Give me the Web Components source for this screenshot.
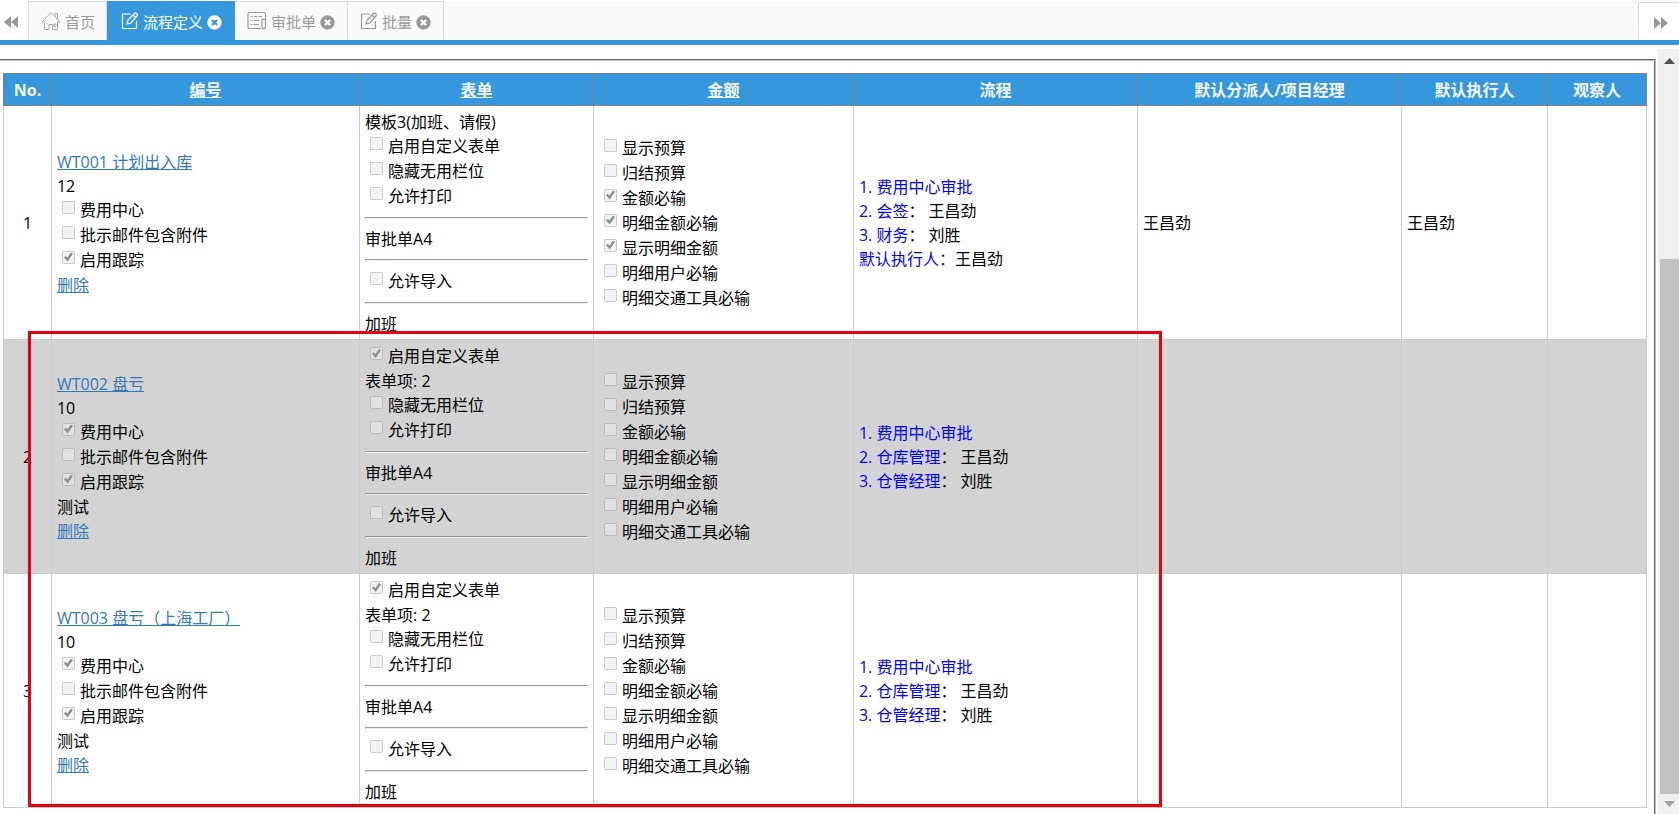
<!DOCTYPE html>
<html lang="zh-CN">
<head>
<meta charset="utf-8">
<title>流程定义</title>
<style>
html, body { height: 100%; margin: 0; }
body { overflow: hidden; background: #fff; color: #000; font: 16px/24px "Open Sans", "Noto Sans CJK SC", sans-serif; }
</style>
</head>
<body>
<app-shell>
  <tab-bar slot="tabs">
    <tab-item icon="home">首页</tab-item>
    <tab-item icon="edit" active closable>流程定义</tab-item>
    <tab-item icon="form" closable>审批单</tab-item>
    <tab-item icon="edit" closable>批量</tab-item>
  </tab-bar>
  <flow-table></flow-table>
</app-shell>
<script>
const define = (name, html, setup) => customElements.define(name, class extends HTMLElement {
  constructor() {
    super();
    this.attachShadow({ mode: 'open' }).innerHTML = html;
  }
  connectedCallback() { if (setup && !this.ready) { this.ready = true; setup(this, this.shadowRoot); } }
});

define('app-shell', `
<style>
:host { display: flex; flex-direction: column; height: 100vh; }
.body { flex: 1; min-height: 0; display: flex; gap: 2px; }
.panel { flex: 1; min-width: 0; box-sizing: border-box; margin-top: 14px; padding: 13px 8px 0 3px; overflow: hidden;
  border-top: 1px solid #6e6e6e; border-right: 1px solid #bbb; box-shadow: inset 0 1px #bbb, inset -1px 0 #6e6e6e; }
scroll-rail { margin-top: 4px; }
</style>
<slot name="tabs"></slot>
<div class="body"><main class="panel"><slot></slot></main><scroll-rail></scroll-rail></div>`);

define('scroll-rail', `
<style>
:host { display: flex; flex-direction: column; width: 21px; background: #f0f0f0; box-sizing: border-box; padding-left: 2px; }
button { all: unset; height: 20px; display: flex; align-items: center; justify-content: center; }
button:first-of-type { height: 24px; }
svg { display: block; }
.track { flex: 1; display: flex; flex-direction: column; }
.rest { flex: 186; }
.thumb { flex: 535; background: #c1c1c1; }
</style>
<button aria-label="向上滚动"><svg width="11" height="6"><path d="M0 6L5.500 0L11 6z" fill="#505050"/></svg></button>
<div class="track"><div class="rest"></div><div class="thumb"></div></div>
<button aria-label="向下滚动"><svg width="11" height="6"><path d="M0 0L5.500 6L11 0z" fill="#a3a3a3"/></svg></button>`);

define('tab-bar', `
<style>
:host { display: flex; height: 39px; padding-top: 1px; background: linear-gradient(#fff 1px, #fafafa 1px); border-bottom: 5px solid #3598dc; }
nav { flex: 1; display: flex; min-width: 0; }
button { all: unset; box-sizing: border-box; background: #fff; display: flex; align-items: center; color: #999; }
.prev { width: 29px; padding-left: 4px; padding-top: 2px; border-right: 1px solid #ddd; }
.next { width: 41px; padding-left: 15px; margin-top: 1px; padding-top: 2px; border-left: 1px solid #ddd; border-top: 1px solid #ddd; }
</style>
<button class="prev" aria-label="向左"><svg width="14" height="14"><path d="M7 1v12L0 7zM14 1v12L7 7z" fill="#999"/></svg></button>
<nav><slot></slot></nav>
<button class="next" aria-label="向右"><svg width="14" height="14"><path d="M0 1v12L7 7zM7 1v12L14 7z" fill="#999"/></svg></button>`);

const icons = {
  home: `<svg width="20" height="20" fill="none" stroke="#aaa" stroke-width="1"><path d="M1 11L10 1.500L19 11M1 11h2.500M16.500 11H19M3.500 11v7.500H8v-5h3.500v5h5V11M5.500 12.500h1M13 13h2v2.500h-2zM14 5.500v-3h2.500v5.500"/></svg>`,
  edit: `<svg width="18" height="18" fill="none" stroke="currentColor" stroke-width="1.200"><path d="M10 2H2.500Q1.500 2 1.500 3v12.500q0 1 1 1H14.500q1 0 1-1V9"/><path d="M6 12l1-4L13.500 1.500q1-1 2 0l.5.500q1 1 0 2L10 11zM12 3l3 3"/></svg>`,
  form: `<svg width="20" height="20" fill="none" stroke="currentColor" stroke-width="1.200"><path d="M14 17.500H2.500Q1 17.500 1 16V3Q1 1.500 2.500 1.500H17Q18.500 1.500 18.500 3V15.500q0 2-1.500 2.500q-2-.5-2-2.500V8.500h3.500M3.500 5.500h2M7 5.500h3M11.500 5.500h3.500M3.500 9.500h2M7 9.500h5M3.500 13.500h2M7 13.500h5"/></svg>`
};

define('tab-item', `
<style>
:host { display: block; flex: none; color: #999; border-top: 1px solid #ddd; border-right: 1px solid #ddd; }
:host([active]) { color: #fff; background: #3598dc; border-color: #3598dc; --cross: #3598dc; }
.tab { display: flex; box-sizing: border-box; align-items: center; height: 38px; padding: 2px 11px 0 12px; }
:host([closable]) .tab { padding-right: 12px; }
:host([active]) .tab { padding-left: 14px; }
a { display: flex; align-items: center; gap: 4px; color: inherit; text-decoration: none; font-size: 15px; }
.icon { display: flex; padding-bottom: 2px; }
button { all: unset; margin-left: 4px; display: flex; }
.cross { stroke: var(--cross, #fafafa); }
</style>
<div class="tab"><a href="#"><span class="icon"></span><slot></slot></a></div>`,
(host, root) => {
  root.querySelector('.icon').innerHTML = icons[host.getAttribute('icon')];
  if (host.hasAttribute('closable')) {
    root.querySelector('.tab').insertAdjacentHTML('beforeend',
      `<button aria-label="关闭"><svg width="15" height="15"><circle cx="7.500" cy="7.500" r="7.200" fill="currentColor"/><path class="cross" d="M5 5l5 5M10 5l-5 5" stroke-width="2.400"/></svg></button>`);
  }
});

define('check-line', `
<style>
:host { display: block; height: 25px; }
label { display: flex; gap: 5px; padding-left: 5px; line-height: 25px; white-space: nowrap; }
input { appearance: none; flex: none; box-sizing: border-box; width: 13px; height: 13px; margin: 3px 0 0;
  border: 1px solid rgba(0,0,0,.17); border-radius: 2px; background: rgba(235,235,235,.6); }
input:checked::before { content: ""; display: block; width: 9px; height: 9px; margin: 1px;
  background: #909090; clip-path: polygon(0 55%, 18% 35%, 38% 55%, 78% 0, 100% 15%, 42% 100%); }
</style>
<label><input type="checkbox" disabled><span><slot></slot></span></label>`,
(host, root) => { root.querySelector('input').checked = host.hasAttribute('checked'); });

const check = (text, on) => `<check-line${on ? ' checked' : ''}>${text}</check-line>`;
const line = html => `<div>${html}</div>`;
const amounts = ['显示预算', '归结预算', '金额必输', '明细金额必输', '显示明细金额', '明细用户必输', '明细交通工具必输'];
const rows = [
  { code: 'WT001 计划出入库', n: 12, cost: 0, custom: 0, form: '模板3(加班、请假)', amount: [2, 3, 4], person: '王昌劲',
    steps: [['费用中心审批'], ['会签', '王昌劲'], ['财务', '刘胜']], executor: '王昌劲' },
  { code: 'WT002 盘亏', n: 10, cost: 1, custom: 1, items: 2, note: '测试', amount: [], person: '',
    steps: [['费用中心审批'], ['仓库管理', '王昌劲'], ['仓管经理', '刘胜']] },
  { code: 'WT003 盘亏（上海工厂）', n: 10, cost: 1, custom: 1, items: 2, note: '测试', amount: [], person: '',
    steps: [['费用中心审批'], ['仓库管理', '王昌劲'], ['仓管经理', '刘胜']] }
];
const renderRow = (r, i) => `<tr>
<td class="no">${i + 1}</td>
<td>${line(`<a href="#">${r.code}</a>`)}${line(r.n)}${check('费用中心', r.cost)}${check('批示邮件包含附件', 0)}${check('启用跟踪', 1)}${r.note ? line(r.note) : ''}${line('<a href="#">删除</a>')}</td>
<td>${r.form ? line(r.form) : ''}${check('启用自定义表单', r.custom)}${r.items ? line('表单项: ' + r.items) : ''}${check('隐藏无用栏位', 0)}${check('允许打印', 0)}<hr>${line('审批单A4')}<hr>${check('允许导入', 0)}<hr>${line('加班')}</td>
<td>${amounts.map((t, k) => check(t, r.amount.includes(k))).join('')}</td>
<td>${r.steps.map(([s, who], k) => line(`<span class="step">${k + 1}. ${s}</span>${who ? '： ' + who : ''}`)).join('')}${r.executor ? line(`<span class="step">默认执行人：</span>${r.executor}`) : ''}</td>
<td>${r.person}</td><td>${r.person}</td><td></td></tr>`;

define('flow-table', `
<style>
:host { display: block; position: relative; }
table { width: 100%; table-layout: fixed; border-collapse: collapse; }
th, td { box-sizing: border-box; }
th { height: 32px; padding: 1px 0 0; color: #f5f5f5; background: #3598dc; border: 1px solid #808080; font-weight: 700; }
th a { color: inherit; }
td { padding: 4px 5px 3px; border: 1px solid #ccc; vertical-align: middle; }
tbody tr:first-child td { border-top-color: #808080; }
tbody tr:nth-child(2) { background: #d3d3d3; }
.no { text-align: center; padding: 0; }
td a { color: #337ab7; text-decoration: underline; }
.step { color: #00f; }
hr { margin: 8px 0; }
.mark { position: absolute; left: 25px; top: 258px; bottom: 1px; width: 69%; box-sizing: border-box; border: 3px solid #e60012; pointer-events: none; }
</style>
<table>
<colgroup><col style="width:2.920%"><col style="width:18.750%"><col style="width:14.240%"><col style="width:15.820%"><col style="width:17.290%"><col style="width:16.070%"><col style="width:8.880%"><col></colgroup>
<thead><tr><th>No.</th><th><a href="#">编号</a></th><th><a href="#">表单</a></th><th><a href="#">金额</a></th><th>流程</th><th>默认分派人/项目经理</th><th>默认执行人</th><th>观察人</th></tr></thead>
<tbody>${rows.map(renderRow).join('')}</tbody>
</table>
<div class="mark"></div>`);
</script>
</body>
</html>
